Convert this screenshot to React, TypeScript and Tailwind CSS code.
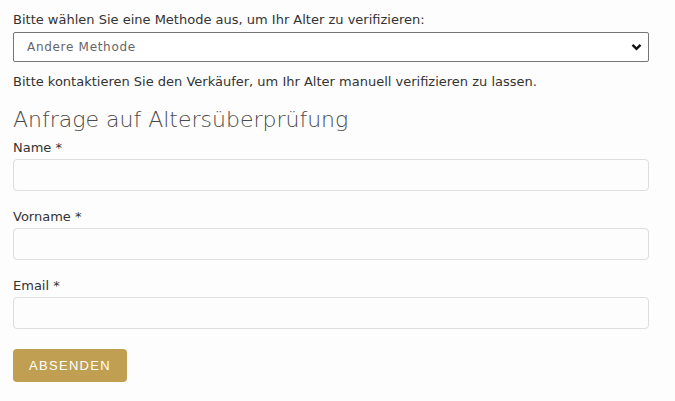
import React from 'react';

const fields = ['Name', 'Vorname', 'Email'];

export default function App() {
  return (
    <div className="min-h-[401px] bg-[#fdfdfd] px-[13px] pt-[10px] text-[13px] leading-[20px] text-[#333] font-['DejaVu_Sans',sans-serif]">
      <label className="block">Bitte wählen Sie eine Methode aus, um Ihr Alter zu verifizieren:</label>
      <div className="relative mt-[2px] w-[636px]">
        <select className="block h-[30px] w-full appearance-none rounded-[2px] border border-[#767676] bg-white pl-[13px] text-[12px] tracking-[0.7px] text-[#666] outline-none">
          <option>Andere Methode</option>
        </select>
        <svg className="pointer-events-none absolute right-[7px] top-[11px]" width="11" height="8" viewBox="0 0 11 8">
          <path d="M1.5 1.8 L5.5 5.8 L9.5 1.8" fill="none" stroke="#111" strokeWidth="2.4" />
        </svg>
      </div>
      <p className="mt-[10px]">Bitte kontaktieren Sie den Verkäufer, um Ihr Alter manuell verifizieren zu lassen.</p>
      <h2 className="mt-[15px] text-[22px] leading-[26px] font-extralight text-[#4a4a4a]">Anfrage auf Altersüberprüfung</h2>
      <form className="mt-[5px] w-[636px]" onSubmit={(e) => e.preventDefault()}>
        {fields.map((f, i) => (
          <div key={f} className={i > 0 ? 'mt-[16px]' : ''}>
            <label className="block">{f} *</label>
            <input className="mt-[1px] block h-[32px] w-full rounded-[4px] border border-[#ddd] bg-[#fdfdfd] px-2 outline-none" />
          </div>
        ))}
        <button type="submit" className="mt-[20px] h-[33px] w-[114px] rounded-[4px] bg-[#c09f53] text-[13px] uppercase tracking-[1.3px] text-white font-['Liberation_Sans',sans-serif]">
          Absenden
        </button>
      </form>
    </div>
  );
}
